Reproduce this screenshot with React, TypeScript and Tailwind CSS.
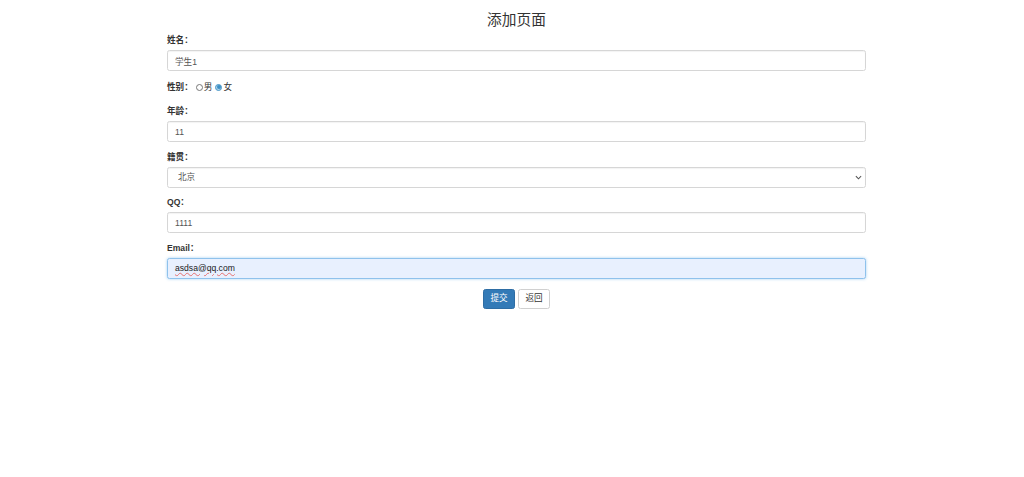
import type { ReactNode } from "react";

const font = {
  fontFamily: '"Liberation Sans", "Noto Sans CJK SC", Arial, sans-serif',
};

function Field({ label, children }: { label: string; children: ReactNode }) {
  return (
    <div className="mb-[8.5px]">
      <label className="mb-[4px] block text-[8.6px] font-bold leading-[12px] text-[#333]">{label}</label>
      {children}
    </div>
  );
}

const inputCls =
  "block h-[21px] w-full rounded-[2.5px] border border-[#d6d6d6] bg-white px-[7px] text-[8.6px] text-[#555] shadow-[inset_0_1px_1px_rgba(0,0,0,0.05)] outline-none";

function Radio({ checked }: { checked?: boolean }) {
  return checked ? (
    <span className="inline-flex h-[7px] w-[7px] items-center justify-center rounded-full border border-[#4a98c9] bg-[#a9d2ea]">
      <span className="h-[3.5px] w-[3.5px] rounded-full bg-[#3d8fc4]" />
    </span>
  ) : (
    <span className="inline-block h-[7px] w-[7px] rounded-full border border-[#777] bg-white" />
  );
}

export default function App() {
  return (
    <div className="min-h-[477px] bg-white pl-[9px]" style={font}>
      <div className="mx-auto w-[699px]">
        <h3 className="pt-[12px] pb-[5px] text-center text-[14.7px] font-normal leading-[17px] text-[#333]">
          添加页面
        </h3>

        <form onSubmit={(e) => e.preventDefault()}>
          <Field label="姓名：">
            <input className={inputCls} defaultValue="学生1" />
          </Field>

          <div className="mt-[10px] mb-[12px] flex h-[12px] items-center text-[8.6px] text-[#333]">
            <span className="font-bold">性别：</span>
            <span className="ml-[3px] flex items-center">
              <Radio />
              <span className="ml-[1px]">男</span>
            </span>
            <span className="ml-[3px] flex items-center">
              <Radio checked />
              <span className="ml-[1px]">女</span>
            </span>
          </div>

          <Field label="年龄：">
            <input className={inputCls} defaultValue="11" />
          </Field>

          <Field label="籍贯：">
            <div className="relative">
              <select className={inputCls + " appearance-none pl-[10px]"} defaultValue="北京">
                <option>北京</option>
                <option>上海</option>
                <option>广州</option>
              </select>
              <svg
                className="pointer-events-none absolute right-[4px] top-[8px] h-[5px] w-[7px] text-[#555]"
                viewBox="0 0 8 5"
                fill="none"
                stroke="currentColor"
                strokeWidth="1.2"
              >
                <path d="M1 1l3 3 3-3" />
              </svg>
            </div>
          </Field>

          <Field label="QQ：">
            <input className={inputCls} defaultValue="1111" />
          </Field>

          <Field label="Email：">
            {/* focused, autofilled field with the spell-check squiggle under the value */}
            <div
              role="textbox"
              contentEditable
              suppressContentEditableWarning
              className="flex h-[21px] w-full items-center rounded-[2.5px] border border-[#8fc2ec] bg-[#e8f0fe] px-[7px] text-[8.6px] text-[#1a1a1a] shadow-[0_0_3px_rgba(102,175,233,0.6)] outline-none"
            >
              <span className="underline decoration-[#e67070] decoration-wavy decoration-[length:0.4px] underline-offset-[1px]">
                asdsa@qq.com
              </span>
            </div>
          </Field>

          <div className="mt-[10px] flex justify-center gap-[3px]">
            <button
              type="submit"
              className="h-[20px] w-[32px] rounded-[2.5px] border border-[#2e6da4] bg-[#337ab7] text-[8.6px] text-white"
            >
              提交
            </button>
            <button
              type="button"
              className="h-[20px] w-[32px] rounded-[2.5px] border border-[#d0d0d0] bg-white text-[8.6px] text-[#333]"
            >
              返回
            </button>
          </div>
        </form>
      </div>
    </div>
  );
}
